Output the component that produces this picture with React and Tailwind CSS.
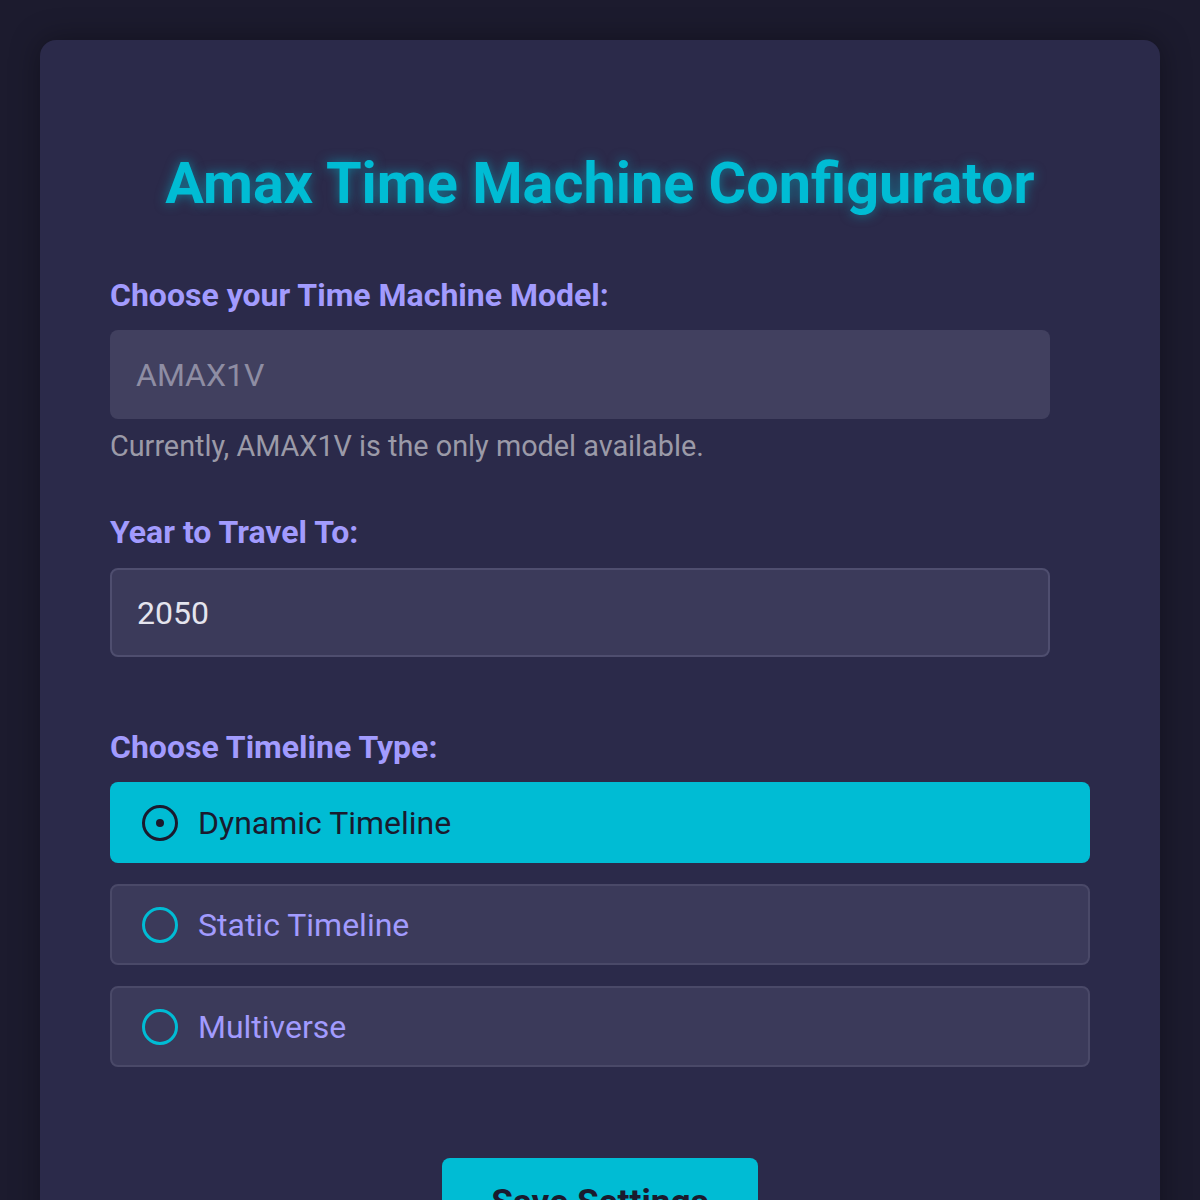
import { useState } from 'react';

const options = ['Dynamic Timeline', 'Static Timeline', 'Multiverse'];

export default function App() {
  const [timeline, setTimeline] = useState('Dynamic Timeline');
  const [year, setYear] = useState('2050');

  return (
    <div className="min-h-[1200px] bg-[#1c1b2e] px-10 pt-10 font-['Roboto',sans-serif]">
      <div className="rounded-2xl bg-[#2b2a4a] px-[70px] pt-[109px] pb-20 shadow-[0_0_30px_rgba(0,0,0,0.35)]">
        <h1 className="text-center text-[57.6px] font-bold leading-[69px] text-[#00bcd4] [text-shadow:0_0_12px_rgba(0,188,212,0.55)]">
          Amax Time Machine Configurator
        </h1>

        <div className="mt-[58px]">
          <label className="block text-[32px] font-bold leading-[38px] text-[#a29bfe]">
            Choose your Time Machine Model:
          </label>
          <input
            disabled
            placeholder="AMAX1V"
            className="mt-4 block h-[89px] w-[940px] rounded-lg bg-[#41405f] px-[26px] text-[32px] text-[#8e8da3] placeholder:text-[#8e8da3]"
          />
          <p className="mt-[10px] text-[28.8px] leading-[34px] text-[#9b9aa8]">
            Currently, AMAX1V is the only model available.
          </p>
        </div>

        <div className="mt-[50px]">
          <label className="block text-[32px] font-bold leading-[38px] text-[#a29bfe]">
            Year to Travel To:
          </label>
          <input
            value={year}
            onChange={e => setYear(e.target.value)}
            className="mt-[17px] block h-[89px] w-[940px] rounded-lg border-2 border-[#4f4e6f] bg-[#3b3a5a] px-[25px] text-[32px] text-[#e4e4ee] outline-none"
          />
        </div>

        <div className="mt-[71px]">
          <label className="block text-[32px] font-bold leading-[38px] text-[#a29bfe]">
            Choose Timeline Type:
          </label>
          <div className="mt-4 flex flex-col gap-[21px]">
            {options.map(opt => {
              const active = opt === timeline;
              return (
                <button
                  key={opt}
                  onClick={() => setTimeline(opt)}
                  className={
                    active
                      ? 'flex h-[81px] items-center gap-[20px] rounded-lg bg-[#00bcd4] pl-[32px] text-left text-[32px] text-[#1a1a2e]'
                      : 'flex h-[81px] items-center gap-[20px] rounded-lg border-2 border-[#4a4968] bg-[#3b3a5a] pl-[30px] text-left text-[32px] text-[#a29bfe]'
                  }
                >
                  <span
                    className={
                      active
                        ? 'flex h-9 w-9 items-center justify-center rounded-full border-[3.5px] border-[#1a1a2e]'
                        : 'flex h-9 w-9 items-center justify-center rounded-full border-[3.5px] border-[#00bcd4]'
                    }
                  >
                    {active && <span className="h-2 w-2 rounded-full bg-[#1a1a2e]" />}
                  </span>
                  {opt}
                </button>
              );
            })}
          </div>
        </div>

        <div className="mt-[91px] flex justify-center">
          <button className="h-[88px] w-[316px] rounded-lg bg-[#00bcd4] text-[35.2px] font-bold text-[#1a1a2e]">
            Save Settings
          </button>
        </div>
      </div>
    </div>
  );
}
